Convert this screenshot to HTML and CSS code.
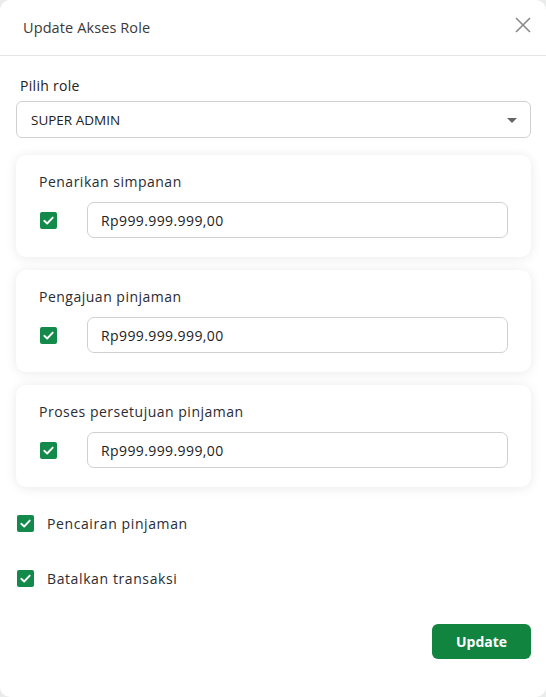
FILE: index.html
```html
<!DOCTYPE html>
<html lang="id">
<head>
<meta charset="utf-8">
<title>Update Akses Role</title>
<link rel="stylesheet" href="styles.css">
</head>
<body>
<div class="modal">
  <div class="modal-header">
    <h1 class="modal-title">Update Akses Role</h1>
    <button class="close-btn" aria-label="Tutup">
      <svg width="16" height="16" viewBox="0 0 16 16"><path d="M1 1L15 15M15 1L1 15" stroke="#8a8a8a" stroke-width="1.6" fill="none"/></svg>
    </button>
  </div>
  <div class="modal-body">
    <label class="field-label">Pilih role</label>
    <div class="select">
      <span>SUPER ADMIN</span>
      <svg class="caret" width="10" height="5" viewBox="0 0 10 5"><path d="M0 0H10L5 5Z" fill="#666"/></svg>
    </div>

    <div class="card">
      <div class="card-title">Penarikan simpanan</div>
      <div class="card-row">
        <span class="check"><svg viewBox="0 0 16 16"><path d="M3.5 8.3L6.6 11.2L12.5 4.9" stroke="#fff" stroke-width="2" fill="none" stroke-linecap="round" stroke-linejoin="round"/></svg></span>
        <div class="input">Rp999.999.999,00</div>
      </div>
    </div>

    <div class="card">
      <div class="card-title">Pengajuan pinjaman</div>
      <div class="card-row">
        <span class="check"><svg viewBox="0 0 16 16"><path d="M3.5 8.3L6.6 11.2L12.5 4.9" stroke="#fff" stroke-width="2" fill="none" stroke-linecap="round" stroke-linejoin="round"/></svg></span>
        <div class="input">Rp999.999.999,00</div>
      </div>
    </div>

    <div class="card">
      <div class="card-title">Proses persetujuan pinjaman</div>
      <div class="card-row">
        <span class="check"><svg viewBox="0 0 16 16"><path d="M3.5 8.3L6.6 11.2L12.5 4.9" stroke="#fff" stroke-width="2" fill="none" stroke-linecap="round" stroke-linejoin="round"/></svg></span>
        <div class="input">Rp999.999.999,00</div>
      </div>
    </div>

    <div class="check-line">
      <span class="check"><svg viewBox="0 0 16 16"><path d="M3.5 8.3L6.6 11.2L12.5 4.9" stroke="#fff" stroke-width="2" fill="none" stroke-linecap="round" stroke-linejoin="round"/></svg></span>
      <span>Pencairan pinjaman</span>
    </div>
    <div class="check-line">
      <span class="check"><svg viewBox="0 0 16 16"><path d="M3.5 8.3L6.6 11.2L12.5 4.9" stroke="#fff" stroke-width="2" fill="none" stroke-linecap="round" stroke-linejoin="round"/></svg></span>
      <span>Batalkan transaksi</span>
    </div>

    <div class="footer">
      <button class="btn-update">Update</button>
    </div>
  </div>
</div>
</body>
</html>
```

FILE: styles.css
```css
* { box-sizing: border-box; }
html, body { margin: 0; padding: 0; }
body {
  background: #e9ecea;
  font-family: "Open Sans", "Liberation Sans", sans-serif;
  color: #2b2b33;
  width: 546px;
  height: 697px;
  overflow: hidden;
}
.modal {
  width: 546px;
  height: 697px;
  background: #fff;
  border-radius: 10px;
  overflow: hidden;
}
.modal-header {
  height: 56px;
  border-bottom: 1px solid #e3e5e5;
  display: flex;
  align-items: center;
  justify-content: space-between;
  padding: 0 14px 0 23px;
}
.modal-title {
  margin: 0;
  font-size: 14.5px;
  font-weight: 400;
  color: #3a3a3a;
  letter-spacing: 0.1px;
}
.close-btn {
  border: 0;
  background: none;
  padding: 0;
  width: 18px;
  height: 18px;
  display: flex;
  align-items: center;
  justify-content: center;
  margin-top: -6px;
}
.modal-body {
  padding: 20px 15px 0 16px;
}
.field-label {
  display: block;
  font-size: 14px;
  line-height: 20px;
  margin-left: 4px;
  color: #222;
  letter-spacing: 0.3px;
}
.select {
  margin-top: 5px;
  height: 37px;
  border: 1px solid #cfd1d1;
  border-radius: 6px;
  display: flex;
  align-items: center;
  justify-content: space-between;
  padding: 0 13px 0 14px;
  font-size: 13.5px;
  color: #222;
}
.caret { margin-top: 1px; }
.card {
  margin-top: 17px;
  background: #fff;
  border-radius: 10px;
  box-shadow: 0 1px 12px rgba(0,0,0,0.09);
  padding: 16px 23px 19px 23px;
  height: 102px;
}
.card + .card { margin-top: 13px; }
.card-title {
  font-size: 14px;
  line-height: 22px;
  color: #2b2b33;
  letter-spacing: 0.5px;
}
.card-row {
  margin-top: 9px;
  display: flex;
  align-items: center;
}
.check {
  width: 17px;
  height: 17px;
  border-radius: 2px;
  background: #13894a;
  display: inline-flex;
  align-items: center;
  justify-content: center;
  flex: none;
}
.check svg { width: 15px; height: 15px; }
.card-row .check { margin-left: 1px; }
.input {
  margin-left: 30px;
  flex: 1;
  height: 36px;
  border: 1px solid #cfd1d1;
  border-radius: 7px;
  display: flex;
  align-items: center;
  padding-left: 13px;
  font-size: 14px;
  color: #222;
  letter-spacing: 0.4px;
}
.check-line {
  display: flex;
  align-items: center;
  height: 20px;
  margin-left: 1px;
  font-size: 14px;
  color: #2b2b33;
  letter-spacing: 0.6px;
}
.check-line .check { margin-right: 13px; }
.card + .check-line { margin-top: 26px; }
.check-line + .check-line { margin-top: 35px; }
.footer {
  display: flex;
  justify-content: flex-end;
  margin-top: 36px;
}
.btn-update {
  width: 99px;
  height: 35px;
  border: 0;
  border-radius: 6px;
  background: #11843f;
  color: #fff;
  font-family: inherit;
  font-size: 14px;
  font-weight: 700;
}
```
